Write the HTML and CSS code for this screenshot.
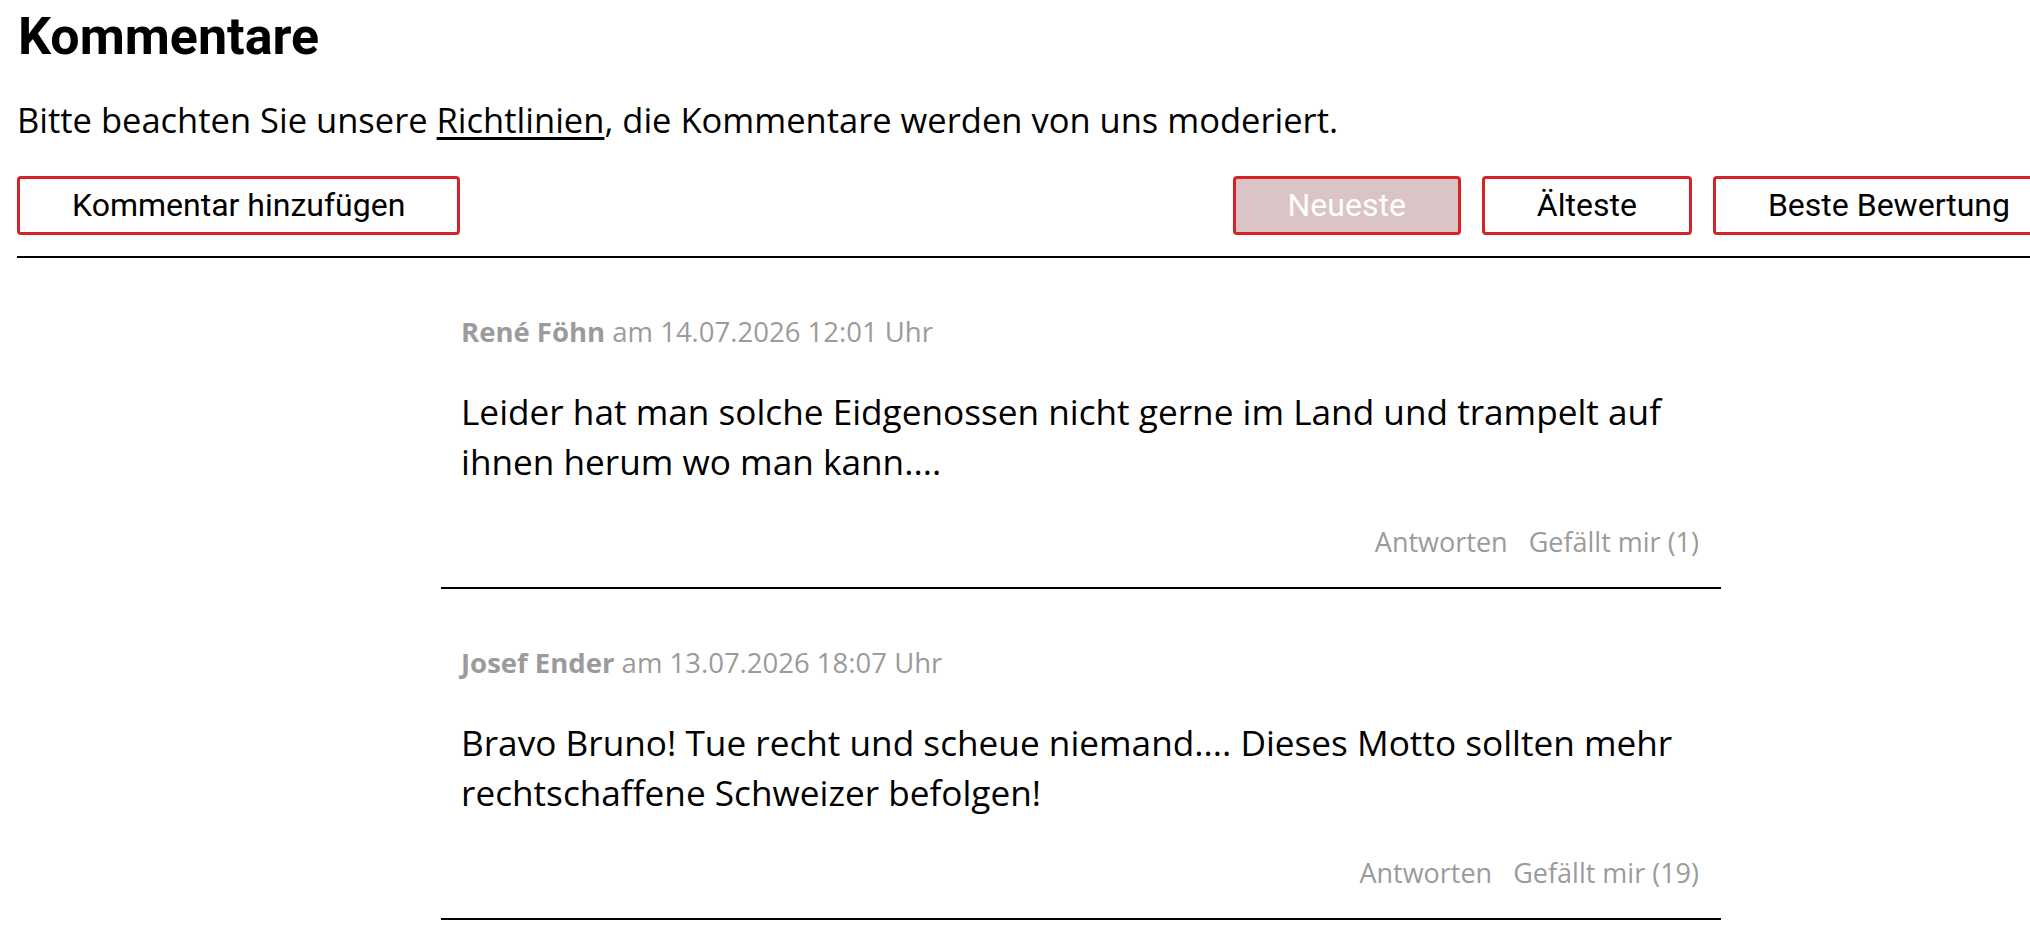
FILE: index.html
```html
<!DOCTYPE html>
<html lang="de">
<head>
  <meta charset="UTF-8" />
  <meta name="viewport" content="width=device-width, initial-scale=1.0"/>
  <title>Kommentare</title>
  <link rel="stylesheet" href="styles.css">
</head>
<body>
  <div class="container">
    <h1>Kommentare</h1>
    <p class="intro">Bitte beachten Sie unsere <a href="#">Richtlinien</a>, die Kommentare werden von uns moderiert.</p>

    <div class="toolbar">
      <button class="btn">Kommentar hinzufügen</button>
      <div class="sort">
        <button class="btn active">Neueste</button>
        <button class="btn">Älteste</button>
        <button class="btn">Beste Bewertung</button>
      </div>
    </div>

    <div class="comments">
      <div class="comment">
        <div class="meta"><b>René Föhn</b> am 14.07.2026 12:01 Uhr</div>
        <p class="text">Leider hat man solche Eidgenossen nicht gerne im Land und trampelt auf ihnen herum wo man kann....</p>
        <div class="actions">
          <a href="#">Antworten</a>
          <a href="#">Gefällt mir (1)</a>
        </div>
      </div>
      <div class="comment">
        <div class="meta"><b>Josef Ender</b> am 13.07.2026 18:07 Uhr</div>
        <p class="text">Bravo Bruno! Tue recht und scheue niemand.... Dieses Motto sollten mehr rechtschaffene Schweizer befolgen!</p>
        <div class="actions">
          <a href="#">Antworten</a>
          <a href="#">Gefällt mir (19)</a>
        </div>
      </div>
    </div>
  </div>
</body>
</html>
```

FILE: styles.css
```css
html, body {
  overflow-x: hidden;
}
body {
  font-family: "Open Sans", Arial, sans-serif;
  margin: 0;
  padding: 0;
  background: #fff;
  color: #000;
}
.container {
  width: 2048px;
  padding-left: 17px;
}
h1 {
  font-family: Roboto, Arial, sans-serif;
  font-size: 52px;
  font-weight: 700;
  line-height: 60px;
  margin: 7px 0 0 1px;
}
.intro {
  font-size: 34.5px;
  line-height: 44px;
  margin: 31px 0 0;
}
.intro a {
  color: #000;
  text-decoration: underline;
  text-underline-offset: 4px;
}
.toolbar {
  display: flex;
  justify-content: space-between;
  margin-top: 34px;
  padding-bottom: 21px;
  border-bottom: 2px solid #000;
}
.sort {
  display: flex;
  gap: 21px;
}
.btn {
  font-family: Roboto, Arial, sans-serif;
  font-size: 32px;
  line-height: 53px;
  padding: 0 52px;
  border: 3px solid #d8222a;
  border-radius: 4px;
  background: #fff;
  color: #000;
  cursor: pointer;
}
.btn.active {
  background: #dbc4c5;
  color: #fff;
}
.comments {
  width: 1280px;
  margin-left: 424px;
}
.comment {
  padding: 57px 22px 28px 20px;
  border-bottom: 2px solid #000;
}
.meta {
  font-size: 27.5px;
  line-height: 34px;
  color: #9b9b9b;
}
.meta b {
  font-weight: 700;
}
.text {
  font-size: 35.2px;
  line-height: 50px;
  margin: 37px 0 0;
}
.actions {
  display: flex;
  justify-content: flex-end;
  gap: 21px;
  margin-top: 39px;
  font-size: 27px;
  line-height: 34px;
}
.actions a {
  color: #9b9b9b;
  text-decoration: none;
}
```
